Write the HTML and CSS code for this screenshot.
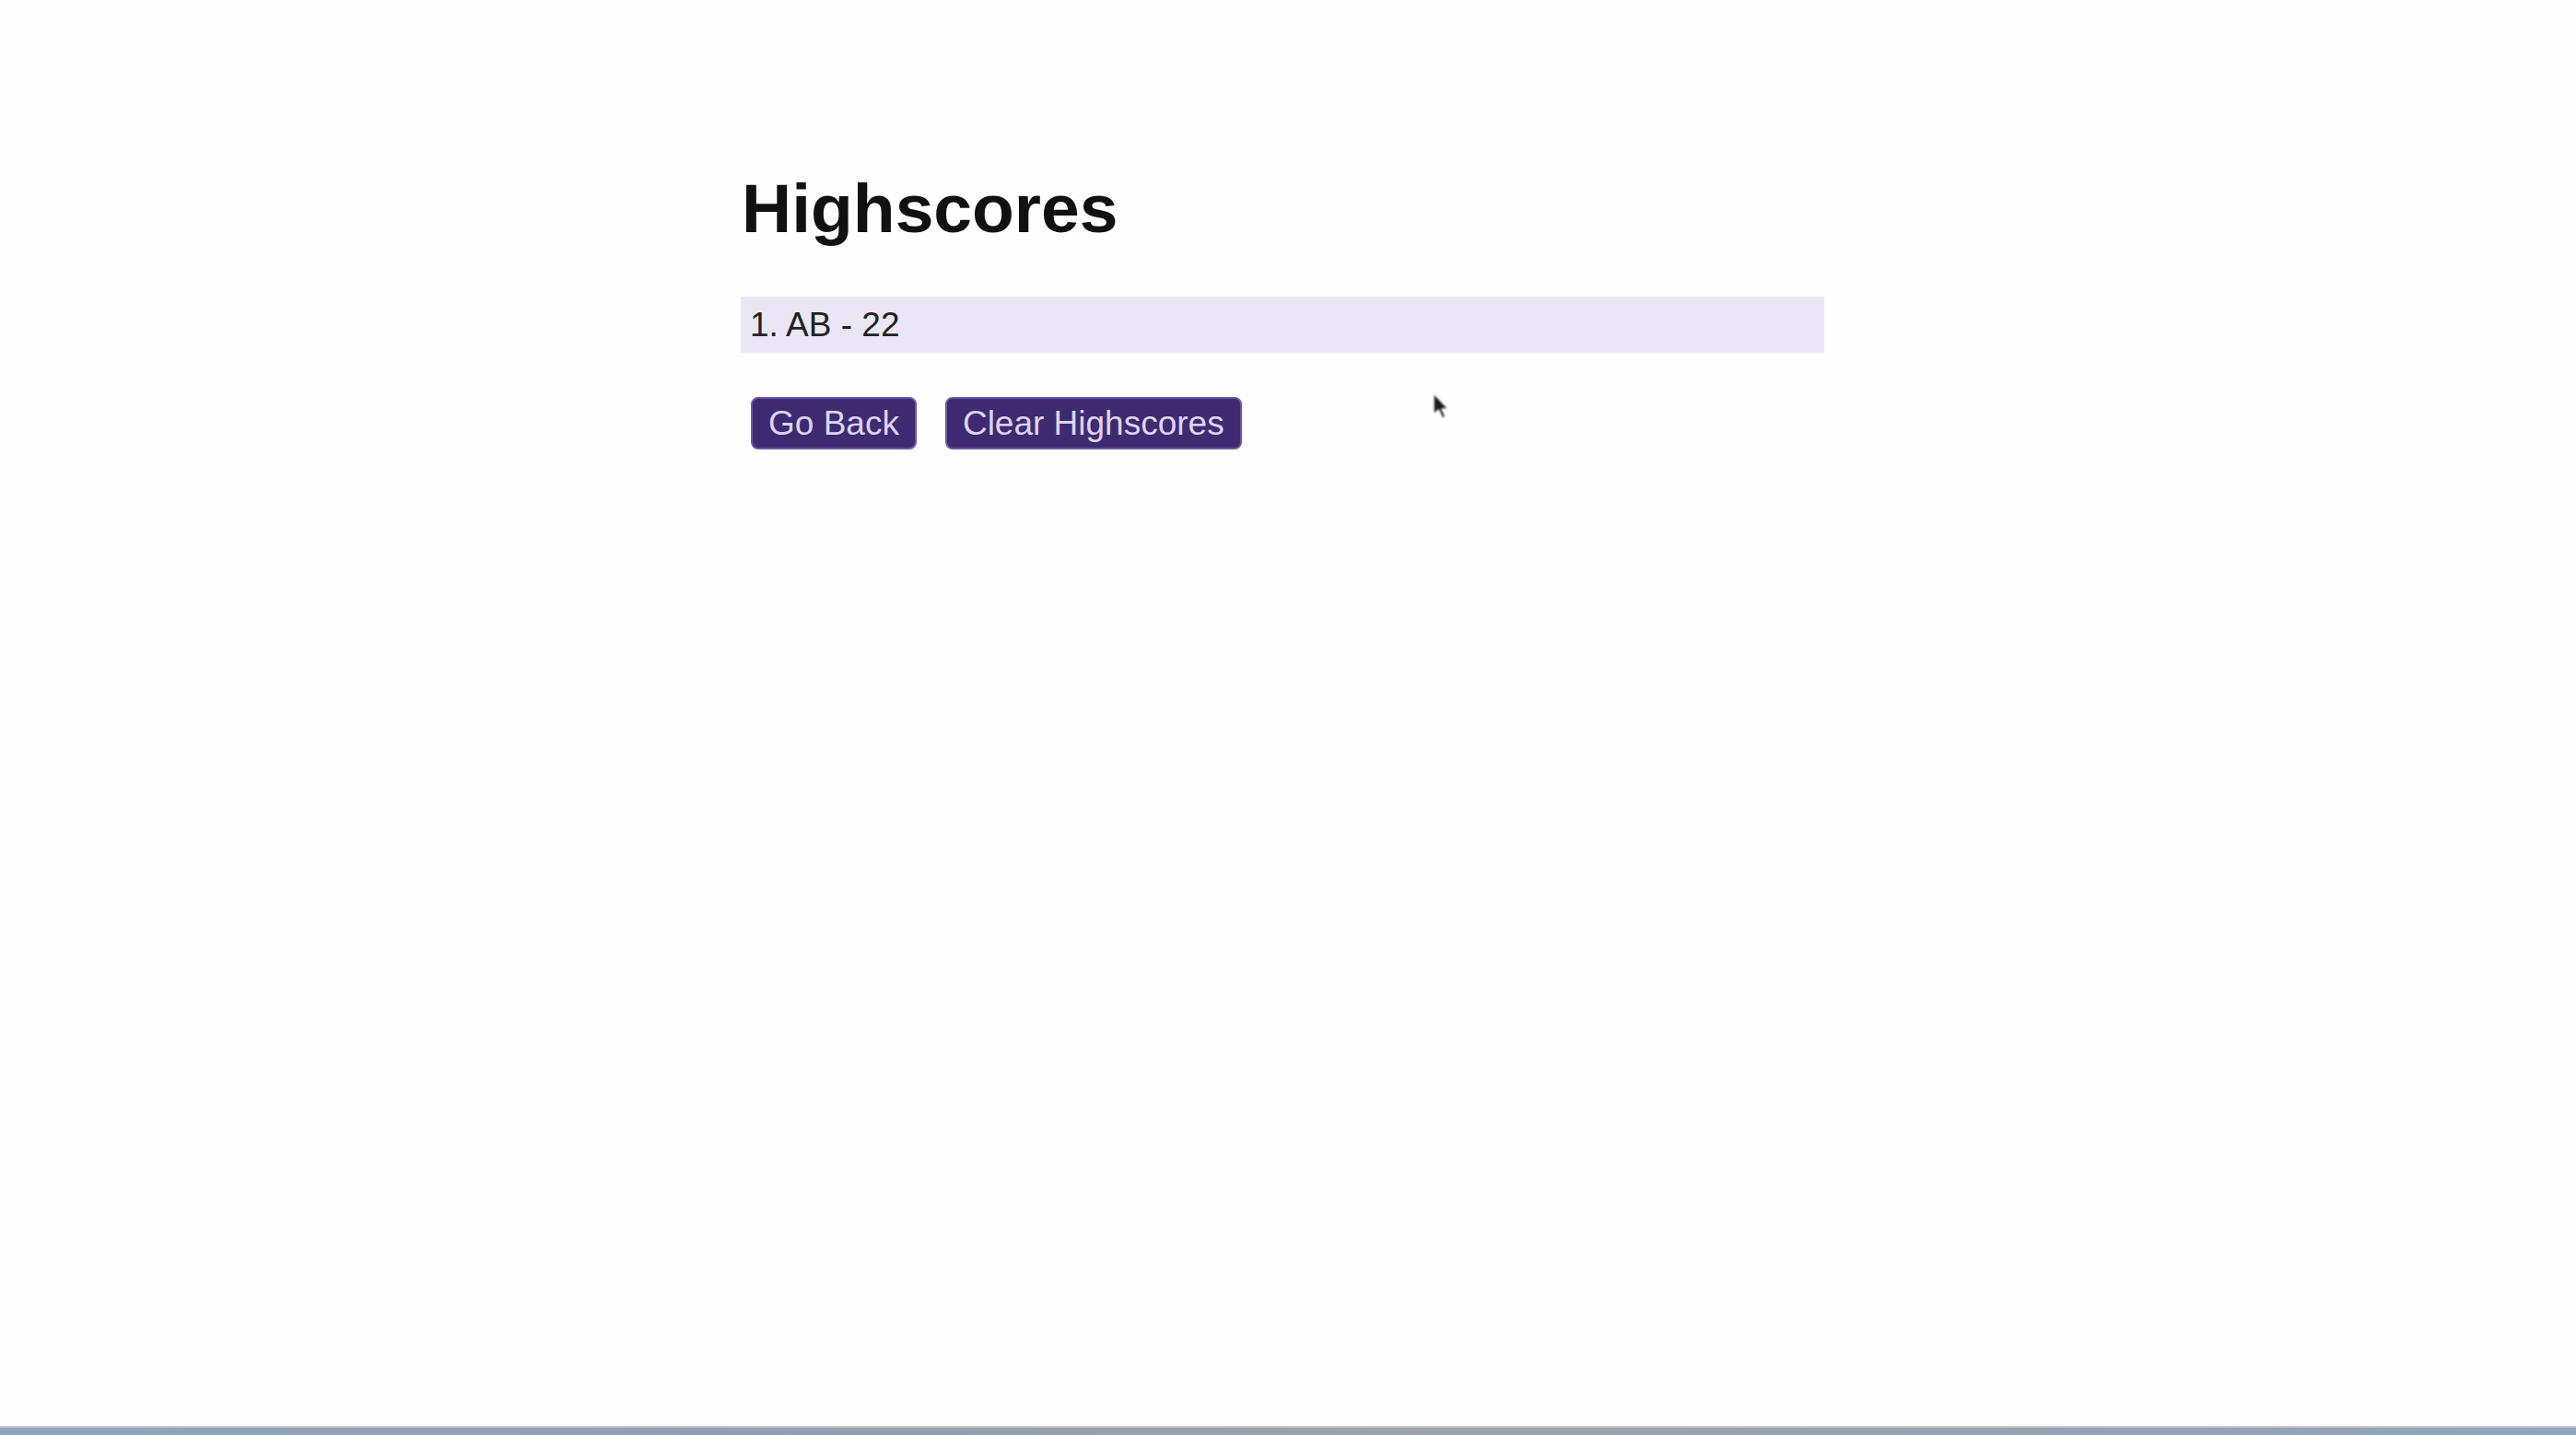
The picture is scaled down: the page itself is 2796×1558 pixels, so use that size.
FILE: index.html
```html
<!DOCTYPE html>
<html lang="en">
<head>
<meta charset="utf-8">
<title>Highscores</title>
<link rel="stylesheet" href="styles.css">
</head>
<body>
<div class="screen">
  <main class="page">
    <h1 class="title">Highscores</h1>
    <ol class="scores">
      <li class="score">1. AB - 22</li>
    </ol>
    <div class="actions">
      <button class="btn" type="button">Go Back</button>
      <button class="btn" type="button">Clear Highscores</button>
    </div>
  </main>
  <div class="edge"></div>
</div>
<svg class="cursor" width="22" height="32" viewBox="0 0 22 32" aria-hidden="true">
  <path d="M3 2 L3 25 L8.5 20 L12.5 29 L16 27.5 L12 19 L19 19 Z" fill="#1a1a1a" stroke="#ffffff" stroke-width="1.5" stroke-linejoin="round"/>
</svg>
</body>
</html>
```

FILE: styles.css
```css
html, body {
  margin: 0;
  padding: 0;
  height: 100%;
}

body {
  background: #fefdff;
  font-family: "Liberation Sans", Arial, sans-serif;
  color: #141414;
  overflow: hidden;
}

.screen {
  min-height: 100vh;
  display: flex;
  flex-direction: column;
}

.page {
  flex: 1;
  width: 1176px;
  margin-left: 804px;
  padding-top: 184px;
}

.title {
  margin: 0;
  font-size: 75px;
  line-height: 1.13;
  font-weight: 700;
  color: #111111;
  padding-left: 1px;
}

.scores {
  list-style: none;
  margin: 53px 0 0;
  padding: 0;
}

.score {
  background: #ebe6f6;
  padding: 10px 10px;
  font-size: 37px;
  line-height: 41px;
  color: #222222;
}

.actions {
  display: flex;
  gap: 31px;
  margin-top: 48px;
  padding-left: 11px;
}

.btn {
  font-family: "Liberation Sans", Arial, sans-serif;
  font-size: 37px;
  line-height: 41px;
  padding: 6px 17px;
  border: 2px solid #6a58a0;
  border-radius: 8px;
  background: #3e2a70;
  color: #ddd3f3;
  cursor: pointer;
}

.edge {
  height: 8px;
  border-top: 2px solid #c9c9cb;
  background: linear-gradient(90deg, #8ea4bf 0%, #929eb2 35%, #9da2a8 55%, #93a2b6 80%, #8fa5c0 100%);
}

.cursor {
  position: absolute;
  left: 1553px;
  top: 425px;
  filter: blur(1.2px);
}
```
